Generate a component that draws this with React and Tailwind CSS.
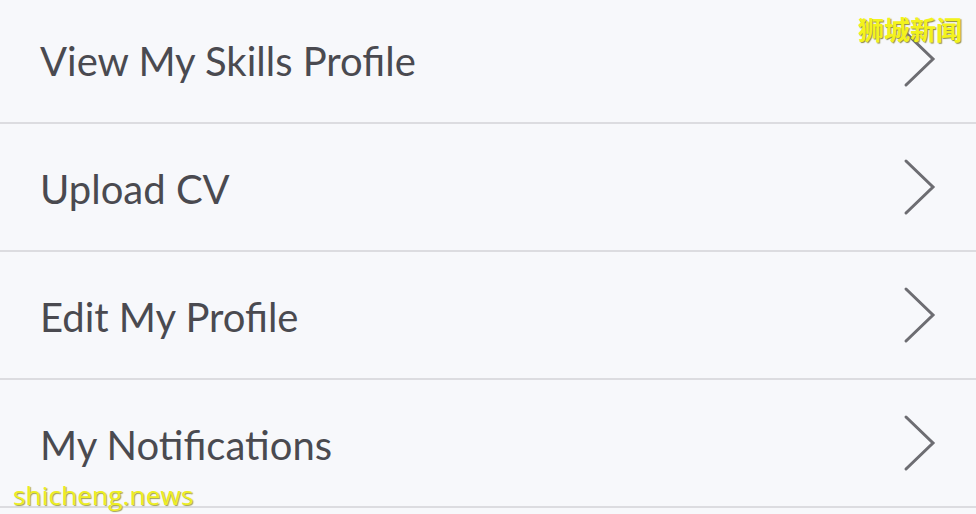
import React from 'react';

const items = ['View My Skills Profile', 'Upload CV', 'Edit My Profile', 'My Notifications'];

const Chevron = () => (
  <svg width="34" height="60" viewBox="0 0 34 60" fill="none">
    <path d="M4 4 L31 30 L4 56" stroke="#6d6d72" strokeWidth="3" strokeLinecap="round" strokeLinejoin="miter" />
  </svg>
);

const App = () => {
  return (
    <div className="relative w-[976px] h-[514px] overflow-hidden bg-[#f7f8fb]" style={{ fontFamily: 'Lato, "Noto Sans", sans-serif' }}>
      <div className="-mt-[4px]">
        {items.map((item) => (
          <div key={item} className="flex items-center justify-between h-[128px] pl-[40px] pr-[40px] border-b-2 border-[#dcdce0]">
            <span className="text-[40px] text-[#4a4a50] leading-none pt-[3px]">{item}</span>
            <Chevron />
          </div>
        ))}
      </div>

      <div
        className="absolute top-[16px] right-[14px] text-[26px] font-bold text-[#f3f31c] leading-none"
        style={{ fontFamily: '"Noto Sans CJK SC", sans-serif', textShadow: '1px 1px 1px #8a8a40' }}
      >
        狮城新闻
      </div>
      <div
        className="absolute left-[13px] bottom-[6px] text-[26px] text-[#eeee22] leading-none tracking-[0.2px]"
        style={{ fontFamily: '"Open Sans", sans-serif', textShadow: '1px 1px 1px #a0a050' }}
      >
        shicheng.news
      </div>
    </div>
  );
};

export default App;
